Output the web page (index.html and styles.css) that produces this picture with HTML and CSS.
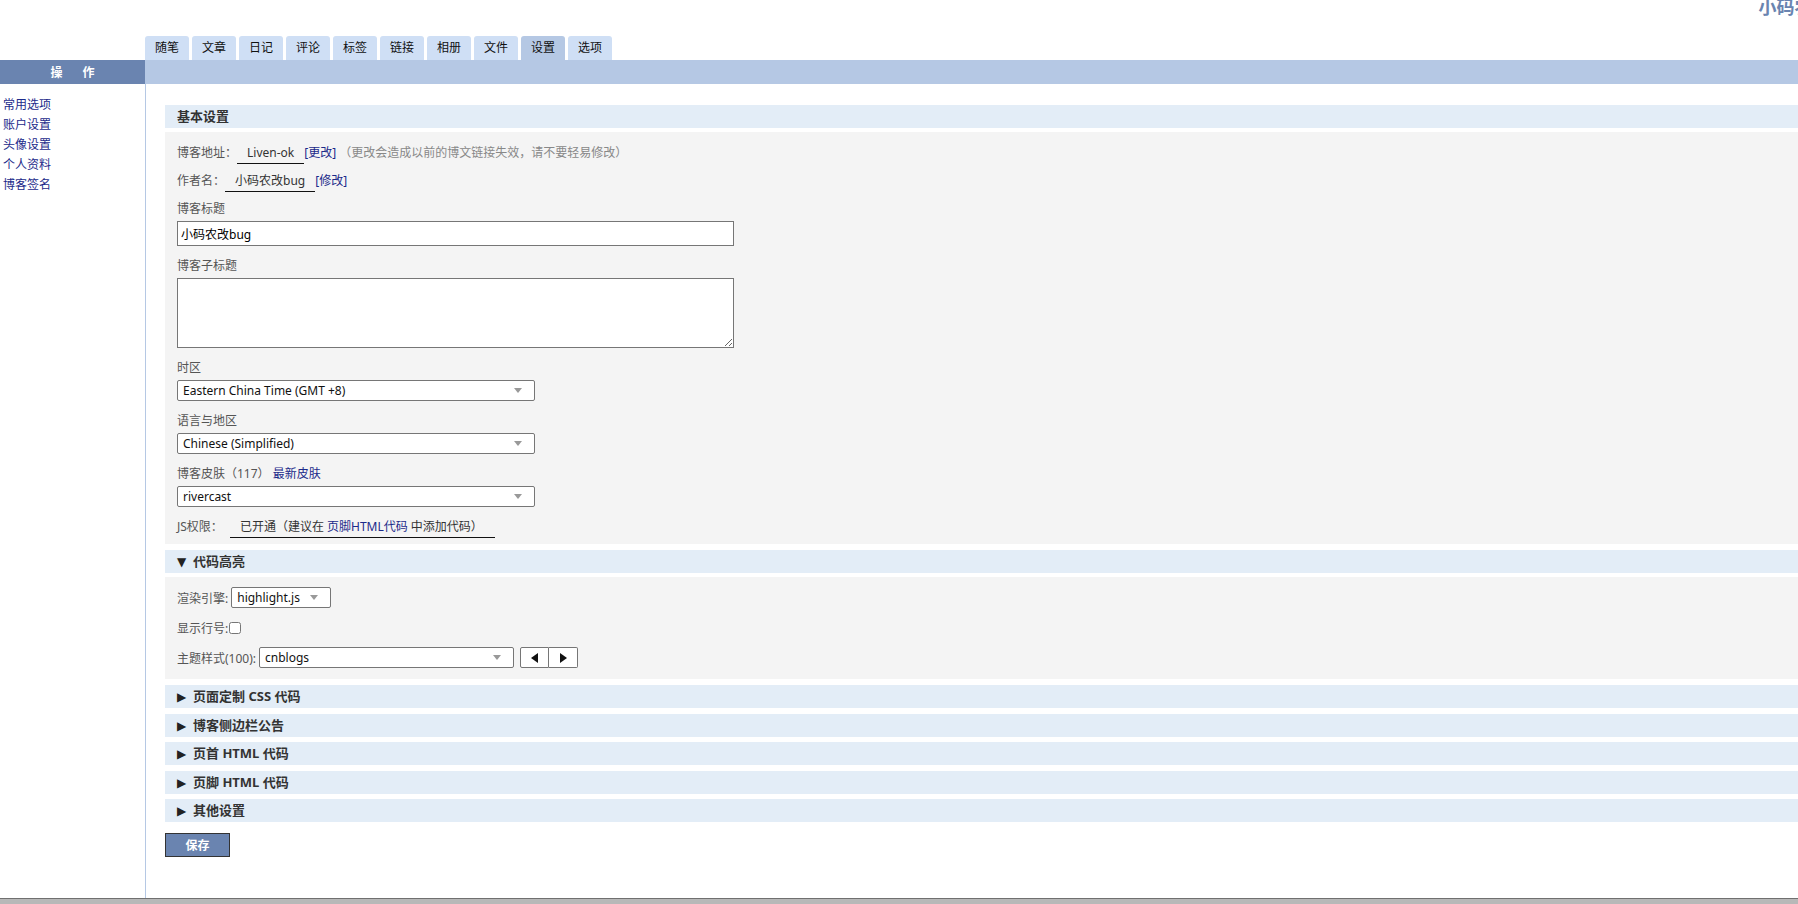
FILE: index.html
```html
<!DOCTYPE html>
<html lang="zh-CN">
<head>
  <meta charset="UTF-8">
  <meta name="viewport" content="width=device-width, initial-scale=1.0">
  <title>博客设置</title>
  <link rel="stylesheet" href="styles.css">
</head>
<body>
  <div class="header">
    <div class="blog-title">小码农改bug</div>
  </div>

  <div class="tabs">
    <a href="#" class="tab">随笔</a>
    <a href="#" class="tab">文章</a>
    <a href="#" class="tab">日记</a>
    <a href="#" class="tab">评论</a>
    <a href="#" class="tab">标签</a>
    <a href="#" class="tab">链接</a>
    <a href="#" class="tab">相册</a>
    <a href="#" class="tab">文件</a>
    <a href="#" class="tab active">设置</a>
    <a href="#" class="tab">选项</a>
  </div>

  <div class="bar">
    <div class="bar-left"><span>操</span><span>作</span></div>
    <div class="bar-right"></div>
  </div>

  <div class="main">
    <div class="sidebar">
      <a href="#">常用选项</a>
      <a href="#">账户设置</a>
      <a href="#">头像设置</a>
      <a href="#">个人资料</a>
      <a href="#">博客签名</a>
    </div>

    <div class="content">
      <div class="section-title">基本设置</div>
      <div class="panel">
        <div class="row">
          <span class="label">博客地址：</span><span class="value">Liven-ok</span><a href="#" class="link">[更改]</a>
          <span class="note">（更改会造成以前的博文链接失效，请不要轻易修改）</span>
        </div>
        <div class="row">
          <span class="label">作者名：</span><span class="value">小码农改bug</span><a href="#" class="link">[修改]</a>
        </div>

        <div class="field-label first">博客标题</div>
        <input type="text" class="text-input" value="小码农改bug">

        <div class="field-label">博客子标题</div>
        <textarea class="text-area"></textarea>

        <div class="field-label">时区</div>
        <div class="select wide">
          <select><option>Eastern China Time (GMT +8)</option></select>
        </div>

        <div class="field-label">语言与地区</div>
        <div class="select wide">
          <select><option>Chinese (Simplified)</option></select>
        </div>

        <div class="field-label">博客皮肤（117） <a href="#" class="link">最新皮肤</a></div>
        <div class="select wide">
          <select><option>rivercast</option></select>
        </div>

        <div class="row js-row">
          <span class="label">JS权限：</span><span class="value js-value">已开通（建议在 <a href="#" class="link">页脚HTML代码</a> 中添加代码）</span>
        </div>
      </div>

      <div class="section-title"><span class="marker">&#9660;</span>代码高亮</div>
      <div class="panel code-panel">
        <div class="inline-row">
          <span class="label">渲染引擎:</span>
          <div class="select engine">
            <select><option>highlight.js</option></select>
          </div>
        </div>
        <div class="inline-row">
          <span class="label">显示行号:</span><input type="checkbox" class="check">
        </div>
        <div class="inline-row">
          <span class="label">主题样式(100):</span>
          <div class="select theme">
            <select><option>cnblogs</option></select>
          </div>
          <div class="arrows">
            <button class="arrow-btn"><svg width="8" height="10" viewBox="0 0 8 10"><path d="M7 0 L7 10 L0 5 Z" fill="#111"/></svg></button>
            <button class="arrow-btn"><svg width="8" height="10" viewBox="0 0 8 10"><path d="M1 0 L1 10 L8 5 Z" fill="#111"/></svg></button>
          </div>
        </div>
      </div>

      <div class="section-title collapsed"><span class="marker">&#9654;</span>页面定制 CSS 代码</div>
      <div class="section-title collapsed"><span class="marker">&#9654;</span>博客侧边栏公告</div>
      <div class="section-title collapsed"><span class="marker">&#9654;</span>页首 HTML 代码</div>
      <div class="section-title collapsed"><span class="marker">&#9654;</span>页脚 HTML 代码</div>
      <div class="section-title collapsed"><span class="marker">&#9654;</span>其他设置</div>

      <button class="save">保存</button>
    </div>
  </div>

  <div class="footer"></div>
</body>
</html>
```

FILE: styles.css
```css
html, body {
  margin: 0;
  padding: 0;
}

body {
  font-family: "Noto Sans", "Noto Sans CJK SC", sans-serif;
  font-size: 12px;
  color: #333;
  height: 100vh;
  display: flex;
  flex-direction: column;
  overflow: hidden;
  background-color: #fff;
}

a {
  text-decoration: none;
}

.header {
  height: 36px;
  display: flex;
  justify-content: flex-end;
  overflow: hidden;
}

/* blog title runs past the right edge, as on the live page */
.blog-title {
  font-size: 18px;
  line-height: 18px;
  font-weight: bold;
  color: #6a84b0;
  white-space: nowrap;
  margin-top: -2px;
  margin-right: -67px;
}

.tabs {
  height: 24px;
  display: flex;
  gap: 3px;
  padding-left: 145px;
}

.tab {
  width: 44px;
  height: 24px;
  line-height: 24px;
  text-align: center;
  background-color: #cfdff5;
  color: #111;
  border-radius: 3px 3px 0 0;
}

.tab.active {
  background-color: #b5c8e4;
}

.bar {
  height: 24px;
  display: flex;
}

.bar-left {
  width: 145px;
  background-color: #6a84b0;
  color: #fff;
  font-weight: bold;
  display: flex;
  justify-content: center;
  align-items: center;
  gap: 20px;
}

.bar-right {
  flex: 1;
  background-color: #b5c8e4;
}

.main {
  flex: 1;
  display: flex;
  min-height: 0;
}

.sidebar {
  width: 145px;
  border-right: 1px solid #b5c8e4;
  padding-top: 11px;
  display: flex;
  flex-direction: column;
}

.sidebar a {
  line-height: 20px;
  padding-left: 3px;
  color: #1c2a8a;
}

.content {
  flex: 1;
  padding: 21px 0 0 19px;
}

.section-title {
  height: 23px;
  line-height: 23px;
  padding-left: 12px;
  background-color: #e3edf7;
  font-size: 13px;
  font-weight: bold;
  color: #333;
  margin-bottom: 4px;
}

.section-title.collapsed {
  margin-bottom: 5.5px;
}

.marker {
  font-family: "DejaVu Sans", sans-serif;
  font-size: 12px;
  display: inline-block;
  width: 16px;
  color: #222;
}

.panel {
  background-color: #f4f4f4;
  padding: 11px 12px 6px;
  margin-bottom: 6px;
}

.row {
  line-height: 20px;
  margin-bottom: 7px;
  white-space: nowrap;
}

.label {
  color: #555;
}

.value {
  display: inline-block;
  line-height: 18px;
  padding: 0 10px 1px;
  border-bottom: 1px solid #111;
  color: #333;
}

.link {
  color: #1c2a8a;
}

.note {
  color: #888;
}

.field-label {
  line-height: 20px;
  margin-top: 10px;
  margin-bottom: 2px;
  color: #555;
}

.field-label.first {
  margin-top: 0;
}

.text-input {
  display: block;
  box-sizing: border-box;
  width: 557px;
  height: 25px;
  border: 1px solid #767676;
  padding: 0 3px;
  font: inherit;
  color: #000;
  background: #fff;
  outline: none;
}

.text-area {
  display: block;
  box-sizing: border-box;
  width: 557px;
  height: 70px;
  border: 1px solid #767676;
  font: inherit;
  background: #fff;
  margin: 0;
}

.select {
  position: relative;
  box-sizing: border-box;
  height: 21px;
  border: 1px solid #767676;
  border-radius: 2px;
  background-color: #fff;
}

.select.wide {
  width: 358px;
}

.select.engine {
  width: 100px;
  margin-left: 3px;
}

.select.theme {
  width: 255px;
  margin-left: 3px;
}

.select select {
  appearance: none;
  -webkit-appearance: none;
  border: none;
  background: transparent;
  width: 100%;
  height: 19px;
  padding: 0 22px 0 5px;
  font: inherit;
  color: #111;
  outline: none;
}

.select::after {
  content: "";
  position: absolute;
  right: 12px;
  top: 7px;
  border-left: 4px solid transparent;
  border-right: 4px solid transparent;
  border-top: 5px solid #999;
  pointer-events: none;
}

.js-row {
  margin-top: 10px;
  margin-bottom: 0;
}

.js-value {
  margin-left: 7px;
  padding-right: 12px;
}

.code-panel {
  padding: 10px 12px 11px;
}

.inline-row {
  display: flex;
  align-items: center;
  height: 21px;
  margin-bottom: 9px;
}

.inline-row:last-child {
  margin-bottom: 0;
}

.check {
  width: 12px;
  height: 12px;
  margin: 0 0 0 1px;
}

.arrows {
  display: flex;
  margin-left: 6px;
}

.arrow-btn {
  width: 29px;
  height: 21px;
  border: 1px solid #767676;
  background-color: #fff;
  padding: 0;
  display: flex;
  align-items: center;
  justify-content: center;
}

.arrow-btn:first-child {
  border-radius: 2px 0 0 2px;
}

.arrow-btn:last-child {
  border-left: none;
  border-radius: 0 2px 2px 0;
}

.save {
  margin-top: 5px;
  width: 65px;
  height: 24px;
  background-color: #6a84b0;
  border: 1px solid #333;
  color: #fff;
  font-family: inherit;
  font-size: 12px;
  font-weight: bold;
  cursor: pointer;
}

.footer {
  height: 5px;
  border-top: 1px solid #707070;
  background-color: #b8b8b8;
}
```
